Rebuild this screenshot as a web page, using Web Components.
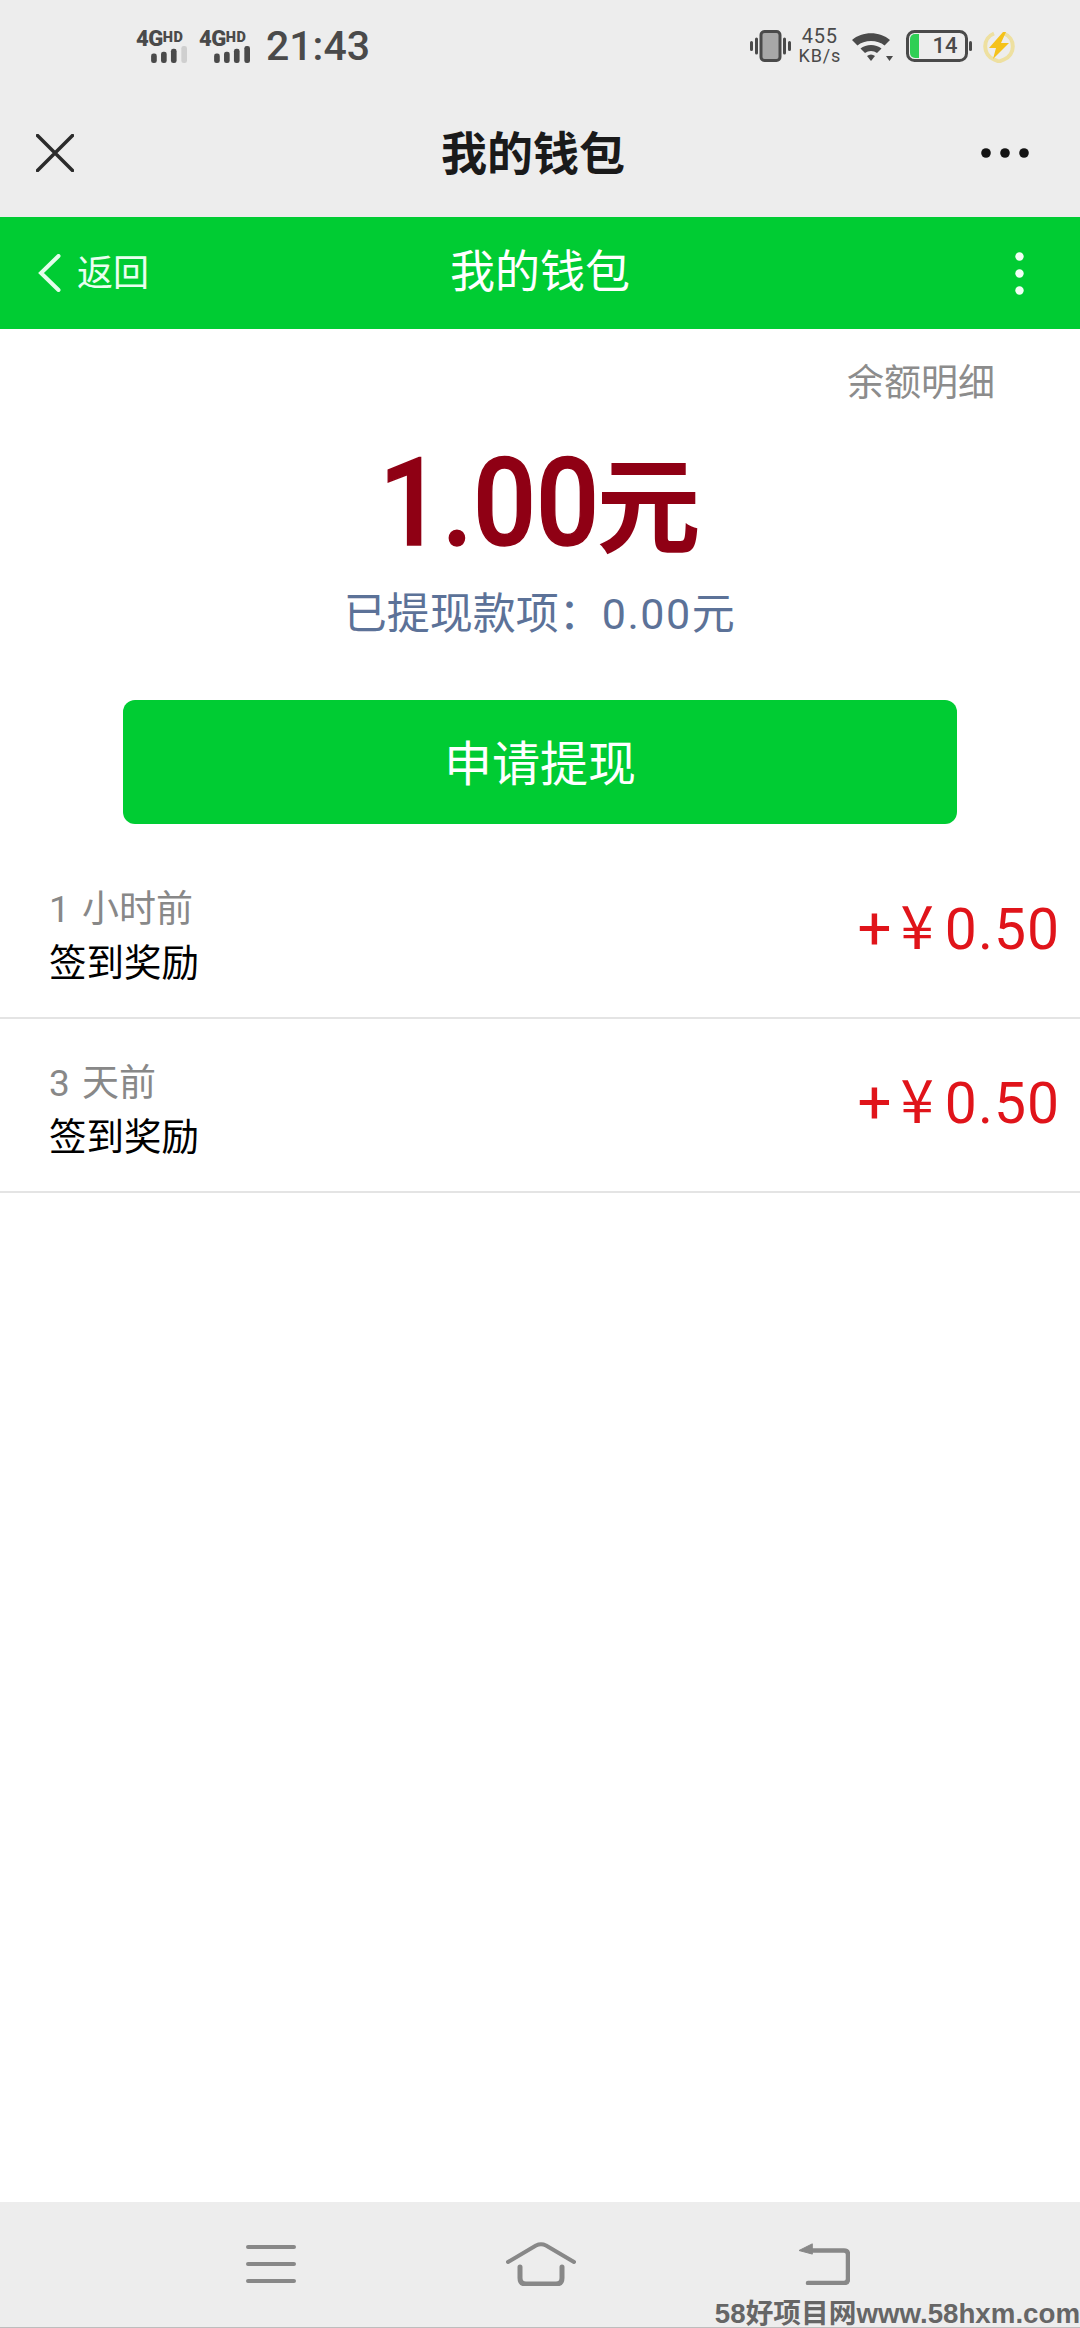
<!DOCTYPE html>
<html lang="zh">
<head>
<meta charset="utf-8">
<title>我的钱包</title>
<style>
html, body { margin: 0; padding: 0; background: #fff; }
body { width: 1080px; height: 2328px; font-family: Roboto, "Noto Sans CJK SC", sans-serif; }
#app { display: flex; flex-direction: column; height: 2328px; position: relative; overflow: hidden; }
</style>
</head>
<body>
<div id="app">
  <status-bar></status-bar>
  <title-bar>我的钱包</title-bar>
  <app-header>我的钱包</app-header>
  <wallet-summary amount="1.00" unit="元" withdrawn="已提现款项：" rest="0.00元"></wallet-summary>
  <record-row time="1 小时前" name="签到奖励" amount="0.50"></record-row>
  <record-row time="3 天前" name="签到奖励" amount="0.50"></record-row>
  <nav-bar></nav-bar>
  <water-mark>58好项目网www.58hxm.com</water-mark>
</div>

<script>
const stack = 'Roboto, "Noto Sans CJK SC", sans-serif';
const green = '#00cc33';

class SignalIcon extends HTMLElement {
    connectedCallback() {
        if (this.shadowRoot) return;
        let last = this.getAttribute('weak') !== null ? '#cfcfcf' : '#4a4a4a';
        this.attachShadow({mode: 'open'}).innerHTML = `
        <style>
            :host { display: flex; flex-direction: column; width: 54px; height: 34px; color: #4a4a4a; }
            .label { font: 900 22px/17px ${stack}; white-space: nowrap; height: 17px; letter-spacing: -.5px; }
            .label span { font-size: 14.500px; vertical-align: 4px; letter-spacing: .6px; }
            svg { display: block; margin: 0 0 0 14px; }
        </style>
        <div class="label">4G<span>HD</span></div>
        <svg width="40" height="18" viewBox="0 0 40 18">
            <rect x="0" y="8" width="6" height="10" rx="2.500" fill="#4a4a4a"/>
            <rect x="10.500" y="6" width="6" height="12" rx="2.500" fill="#4a4a4a"/>
            <rect x="21" y="3" width="6" height="15" rx="2.500" fill="#4a4a4a"/>
            <rect x="32" y="0" width="6" height="18" rx="2.500" fill="${last}"/>
        </svg>`;
    }
}
customElements.define('signal-icon', SignalIcon);

class StatusBar extends HTMLElement {
    connectedCallback() {
        if (this.shadowRoot) return;
        this.attachShadow({mode: 'open'}).innerHTML = `
        <style>
            :host { display: flex; align-items: center; height: 92px; box-sizing: border-box; padding: 0 65px 0 136px; background: #ededed; color: #4a4a4a; font-family: ${stack}; }
            signal-icon + signal-icon { margin-left: 9px; }
            .time { font-size: 41px; font-weight: 500; margin-left: 13px; }
            .right { margin-left: auto; display: flex; align-items: center; }
            svg { display: block; }
            .speed { margin: 0 11px 0 8px; font-size: 18px; line-height: 20px; text-align: center; letter-spacing: .8px; }
            .speed div:first-child { font-size: 20px; line-height: 20px; }
            .batt { position: relative; margin: 0 11px 0 13px; width: 66px; height: 32px; }
            .batt span { position: absolute; left: 18px; right: 6px; top: 0; line-height: 32px; font-size: 22px; font-weight: 500; text-align: center; }
        </style>
        <signal-icon weak></signal-icon>
        <signal-icon></signal-icon>
        <div class="time">21:43</div>
        <div class="right">
            <svg width="41" height="32" viewBox="0 0 41 32">
                <rect x="11" y="1.500" width="19" height="29" rx="3.500" fill="#a8a8a8" stroke="#4a4a4a" stroke-width="3"/>
                <path d="M6.500 9v14M1.500 12.500v7M34.500 9v14M39.500 12.500v7" stroke="#4a4a4a" stroke-width="3" stroke-linecap="round"/>
            </svg>
            <div class="speed"><div>455</div><div>KB/s</div></div>
            <svg width="41" height="31" viewBox="0 0 41 31">
                <path d="M0 9C10 0 28 0 38 9L32.500 14.500C26 8.500 12 8.500 5.500 14.500Z" fill="#4a4a4a"/>
                <path d="M8.500 17.500C14 12.800 24 12.800 29.500 17.500L25 22C21.500 19.300 16.500 19.300 13 22Z" fill="#4a4a4a"/>
                <path d="M15 25C17.500 23 20.500 23 23 25L19 30Z" fill="#4a4a4a"/>
                <path d="M34 25h7l-3.500 5Z" fill="#4a4a4a"/>
            </svg>
            <div class="batt">
                <svg width="66" height="32" viewBox="0 0 66 32">
                    <rect x="1.500" y="1.500" width="59" height="29" rx="7" fill="none" stroke="#4a4a4a" stroke-width="3"/>
                    <path d="M4 9a5 5 0 0 1 5-5h4v24H9a5 5 0 0 1-5-5Z" fill="#2fcf55"/>
                    <rect x="63" y="11" width="3" height="10" rx="1.500" fill="#4a4a4a"/>
                </svg>
                <span>14</span>
            </div>
            <svg width="32" height="33" viewBox="0 0 32 33">
                <path d="M11 3.500A14 14 0 0 0 11 29.500L16 31.500L21 29.500A14 14 0 0 0 21 3.500" fill="none" stroke="#eee0a0" stroke-width="4"/>
                <path d="M20 2L6 18h7l-3 11L26 13h-8l5-11Z" fill="#f5c21a"/>
            </svg>
        </div>`;
    }
}
customElements.define('status-bar', StatusBar);

class TitleBar extends HTMLElement {
    connectedCallback() {
        if (this.shadowRoot) return;
        this.attachShadow({mode: 'open'}).innerHTML = `
        <style>
            :host { display: flex; align-items: center; justify-content: space-between; height: 125px; box-sizing: border-box; padding: 0 51px 4px 36px; background: #ededed; color: #1a1a1a; font-family: ${stack}; }
            svg { display: block; }
            .title { font-size: 46px; font-weight: 700; line-height: 60px; margin: 3px 0 0 11px; }
        </style>
        <svg width="38" height="38" viewBox="0 0 38 38"><path d="M1.500 1.500L36.500 36.500M36.500 1.500L1.500 36.500" stroke="#2b2b2b" stroke-width="3.500" stroke-linecap="round"/></svg>
        <div class="title"><slot></slot></div>
        <svg width="48" height="10" viewBox="0 0 48 10" fill="#141414"><circle cx="5" cy="5" r="4.800"/><circle cx="24" cy="5" r="4.800"/><circle cx="43" cy="5" r="4.800"/></svg>`;
    }
}
customElements.define('title-bar', TitleBar);

class AppHeader extends HTMLElement {
    connectedCallback() {
        if (this.shadowRoot) return;
        this.attachShadow({mode: 'open'}).innerHTML = `
        <style>
            :host { display: grid; grid-template-columns: 1fr auto 1fr; align-items: center; height: 112px; box-sizing: border-box; padding: 0 38px; background: ${green}; color: #fff; font-family: ${stack}; }
            .back { display: flex; align-items: center; gap: 16px; font-size: 36px; color: #e9fff0; }
            .back span { line-height: 44px; margin-top: 2px; }
            .title { font-size: 45px; line-height: 60px; }
            svg { display: block; }
            .more { justify-self: end; margin-right: 18px; }
        </style>
        <div class="back">
            <svg width="23" height="38" viewBox="0 0 23 38"><path d="M20.500 2L3 19L20.500 36" fill="none" stroke="#e4fdec" stroke-width="4" stroke-linecap="round"/></svg>
            <span>返回</span>
        </div>
        <div class="title"><slot></slot></div>
        <svg class="more" width="9" height="43" viewBox="0 0 9 43" fill="#f2fff6"><circle cx="4.500" cy="4.500" r="4.200"/><circle cx="4.500" cy="21.500" r="4.200"/><circle cx="4.500" cy="38.500" r="4.200"/></svg>`;
    }
}
customElements.define('app-header', AppHeader);

class WalletSummary extends HTMLElement {
    connectedCallback() {
        if (this.shadowRoot) return;
        this.attachShadow({mode: 'open'}).innerHTML = `
        <style>
            :host { display: flex; flex-direction: column; align-items: center; box-sizing: border-box; height: 516px; font-family: ${stack}; }
            .detail { align-self: flex-end; margin: 28px 85px 0 0; font-size: 37px; line-height: 54px; color: #8c8c8c; }
            .amount { margin-top: 25px; height: 136px; display: flex; align-items: baseline; line-height: 136px; color: #8f0014; }
            .num { display: inline-block; font-size: 122px; font-weight: 500; -webkit-text-stroke: 1.500px #8f0014; width: 217px; transform: scaleX(.91); transform-origin: 0 50%; white-space: nowrap; }
            .unit { font-size: 104px; font-weight: 700; line-height: 100px; }
            .sub { margin-top: 13px; font-size: 43px; line-height: 58px; color: #5c7298; }
            .sub span { letter-spacing: 1.500px; }
            .btn { margin-top: 57px; width: 834px; height: 124px; box-sizing: border-box; padding-bottom: 5px; border-radius: 12px; background: ${green}; color: #fff; display: flex; align-items: center; justify-content: center; font-size: 48px; }
        </style>
        <div class="detail">余额明细</div>
        <div class="amount"><span class="num">${this.getAttribute('amount')}</span><span class="unit">${this.getAttribute('unit')}</span></div>
        <div class="sub">${this.getAttribute('withdrawn')}<span>${this.getAttribute('rest')}</span></div>
        <div class="btn">申请提现</div>`;
    }
}
customElements.define('wallet-summary', WalletSummary);

class RecordRow extends HTMLElement {
    connectedCallback() {
        if (this.shadowRoot) return;
        this.attachShadow({mode: 'open'}).innerHTML = `
        <style>
            :host { display: flex; align-items: center; justify-content: space-between; height: 174px; box-sizing: border-box; padding: 0 20px 0 49px; border-bottom: 2px solid #e4e4e4; font-family: ${stack}; }
            .left { margin-top: 12px; }
            .time { font-size: 37px; line-height: 52px; color: #888; word-spacing: 3px; }
            .name { font-size: 37.500px; line-height: 54px; color: #000; }
            .money { display: flex; align-items: baseline; margin-bottom: 6px; color: #e0141a; font-size: 57px; }
            .money .plus { margin-right: 9px; font-size: 60px; }
            .money .cny { margin-right: 11px; font-family: "Noto Sans CJK SC", sans-serif; font-size: 60px; line-height: 60px; }
            .money .num { letter-spacing: 1px; }
        </style>
        <div class="left">
            <div class="time">${this.getAttribute('time')}</div>
            <div class="name">${this.getAttribute('name')}</div>
        </div>
        <div class="money"><span class="plus">+</span><span class="cny">¥</span><span class="num">${this.getAttribute('amount')}</span></div>`;
    }
}
customElements.define('record-row', RecordRow);

class NavBar extends HTMLElement {
    connectedCallback() {
        if (this.shadowRoot) return;
        this.attachShadow({mode: 'open'}).innerHTML = `
        <style>
            :host { display: flex; align-items: center; margin-top: auto; height: 126px; box-sizing: border-box; padding: 0 0 2px 246px; background: #ededed; border-bottom: 1px solid #bdbdbd; }
            svg { display: block; fill: none; stroke: #888; stroke-width: 4; stroke-linecap: round; stroke-linejoin: round; }
            .home { margin-left: 210px; }
            .back { margin-left: 222px; }
        </style>
        <svg width="50" height="38" viewBox="0 0 50 38"><path d="M2 2H48M2 19H48M2 36H48"/></svg>
        <svg class="home" width="70" height="44" viewBox="0 0 70 44"><path d="M2 20L30 3.500Q35 1 40 3.500L68 20"/><path d="M14 25V36Q14 42 20 42H50Q56 42 56 36V25" stroke-width="5"/></svg>
        <svg class="back" width="52" height="42" viewBox="0 0 52 42"><path d="M14 7.500H46Q50 7.500 50 11.500V36Q50 40 46 40H10" stroke-width="4.500"/><path d="M14 1L1 7.500L14 11Z" fill="#888" stroke-width="1"/></svg>`;
    }
}
customElements.define('nav-bar', NavBar);

class WaterMark extends HTMLElement {
    connectedCallback() {
        if (this.shadowRoot) return;
        this.attachShadow({mode: 'open'}).innerHTML = `
        <style>
            :host { position: absolute; right: 0; bottom: 0; height: 29px; color: #666; font: 700 27.700px/29px "Liberation Sans", "Noto Sans CJK SC", sans-serif; white-space: nowrap; }
        </style>
        <slot></slot>`;
    }
}
customElements.define('water-mark', WaterMark);
</script>
</body>
</html>
